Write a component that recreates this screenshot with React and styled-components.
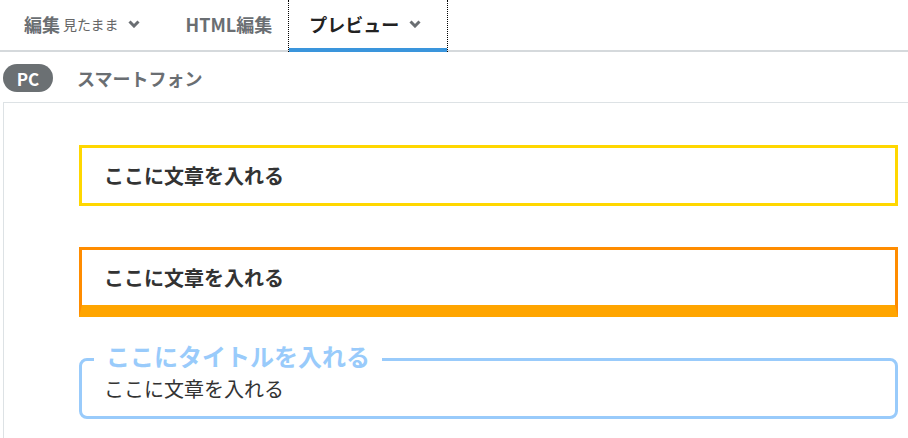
import React from "react";
import styled, { createGlobalStyle } from "styled-components";

const Global = createGlobalStyle`
  html, body { margin: 0; padding: 0; background: #fff; }
  body {
    font-family: "Noto Sans CJK JP", "Noto Sans", sans-serif;
    color: #333;
  }
  * { box-sizing: border-box; }
`;

const TabBar = styled.div`
  display: flex;
  align-items: stretch;
  height: 52px;
  padding-left: 5px;
  border-bottom: 2px solid #d5d9dc;
`;

const Tab = styled.div`
  display: flex;
  align-items: center;
  height: 52px;
  margin-bottom: -2px;
  padding: 0 ${(p) => p.$pr}px 4px ${(p) => p.$pl}px;
  font-size: 18px;
  font-weight: 700;
  color: ${(p) => (p.$active ? "#222" : "#6a6e72")};
  white-space: nowrap;
  border-left: 1px dotted ${(p) => (p.$active ? "#000" : "transparent")};
  border-right: 1px dotted ${(p) => (p.$active ? "#000" : "transparent")};
  box-shadow: ${(p) => (p.$active ? "inset 0 -4px 0 #3a95dc" : "none")};
`;

const SubLabel = styled.span`
  font-size: 14px;
  font-weight: 400;
  color: #666;
  margin-left: 3px;
`;

const Chevron = styled.svg`
  width: 12px;
  height: 8px;
  margin-left: ${(p) => p.$gap}px;
  flex: none;
`;

const DeviceRow = styled.div`
  display: flex;
  align-items: center;
  gap: 24px;
  padding: 12px 0 0 3px;
  margin-bottom: 10px;
`;

const Pill = styled.div`
  width: 50px;
  height: 28px;
  border-radius: 14px;
  background: #6b7073;
  color: #fff;
  font-size: 17px;
  font-weight: 700;
  display: flex;
  align-items: center;
  justify-content: center;
`;

const DeviceLabel = styled.div`
  font-size: 18px;
  font-weight: 700;
  color: #6a6e72;
`;

const Panel = styled.div`
  margin-left: 3px;
  border-top: 1px solid #dde2e5;
  border-left: 1px solid #dde2e5;
  padding: 42px 10px 30px 75px;
  display: flex;
  flex-direction: column;
  gap: 41px;
`;

const Box = styled.div`
  position: relative;
  padding: 14px 22px;
  font-size: 20px;
  line-height: 27px;
  font-weight: ${(p) => (p.$plain ? 400 : 700)};
  color: #333;
  border: 3px solid ${(p) => p.$color};
  border-bottom: ${(p) => p.$bottom || 3}px solid ${(p) => p.$bottomColor || p.$color};
  border-radius: ${(p) => p.$radius || 0}px;
`;

const BoxTitle = styled.div`
  position: absolute;
  top: -17px;
  left: 12px;
  padding: 0 12px;
  background: #fff;
  color: #99cbfb;
  font-size: 24px;
  line-height: 24px;
  font-weight: 700;
`;

const ChevronIcon = ({ gap }) => (
  <Chevron $gap={gap} viewBox="0 0 12 8">
    <polyline points="1.5,1.5 6,6 10.5,1.5" fill="none" stroke="#6a6e72" strokeWidth="3" />
  </Chevron>
);

export default function App() {
  return (
    <>
      <Global />
      <TabBar>
        <Tab $pl={18} $pr={27}>
          編集<SubLabel>見たまま</SubLabel>
          <ChevronIcon gap={9} />
        </Tab>
        <Tab $pl={17} $pr={15}>HTML編集</Tab>
        <Tab $active $pl={20} $pr={26}>
          プレビュー
          <ChevronIcon gap={10} />
        </Tab>
      </TabBar>
      <DeviceRow>
        <Pill>PC</Pill>
        <DeviceLabel>スマートフォン</DeviceLabel>
      </DeviceRow>
      <Panel>
        <Box $color="#ffd700">ここに文章を入れる</Box>
        <Box $color="#ff8c00" $bottomColor="#ffa500" $bottom={12}>
          ここに文章を入れる
        </Box>
        <Box $color="#99cbfb" $radius={8} $plain>
          <BoxTitle>ここにタイトルを入れる</BoxTitle>
          ここに文章を入れる
        </Box>
      </Panel>
    </>
  );
}
